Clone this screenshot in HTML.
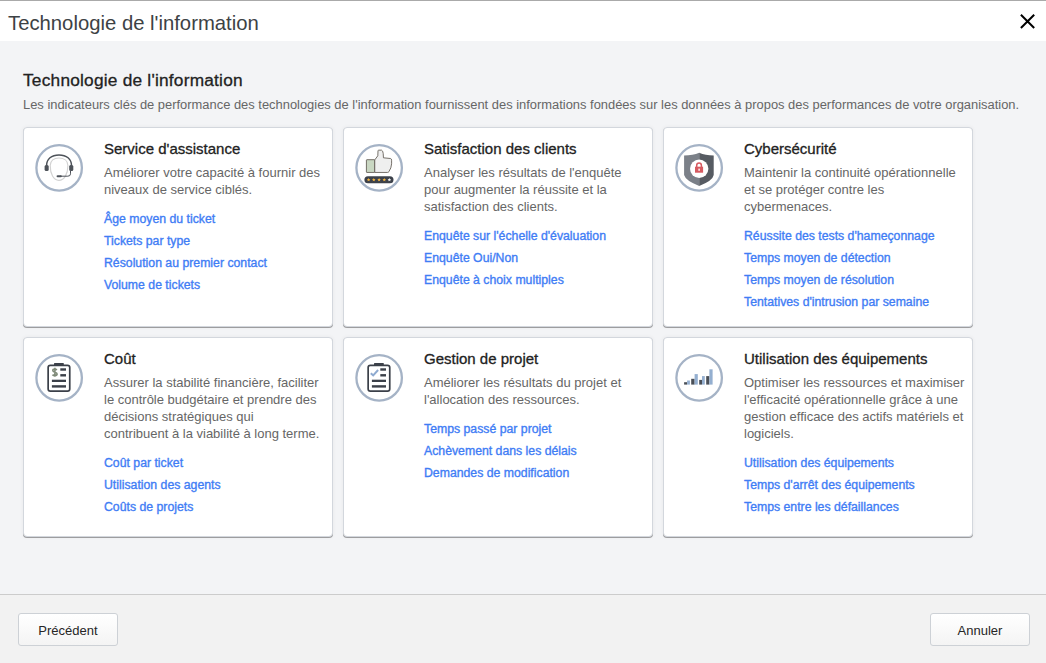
<!DOCTYPE html>
<html><head><meta charset="utf-8">
<style>
*{box-sizing:border-box;margin:0;padding:0}
html,body{width:1046px;height:663px;overflow:hidden;background:#f3f4f6;font-family:"Liberation Sans",sans-serif}
#top{position:absolute;left:0;top:0;width:1046px;height:1px;background:#aaa}
#hdr{position:absolute;left:0;top:1px;width:1046px;height:40px;background:#fff}
#hdr .t{position:absolute;left:8px;top:10px;font-size:20.3px;line-height:24px;color:#3d4245;white-space:nowrap}
#close{position:absolute;left:1010px;top:5px;width:36px;height:33px}
#main{position:absolute;left:0;top:41px;width:1046px;height:553px;background:#f3f4f6}
h1{position:absolute;left:23px;top:70px;font-size:17.3px;letter-spacing:0.22px;line-height:20px;font-weight:400;color:#222;white-space:nowrap;-webkit-text-stroke:0.3px #222}
.lead{position:absolute;left:23px;top:97px;font-size:12.91px;line-height:16px;color:#666;white-space:nowrap}
.card{position:absolute;width:310px;height:200px;background:#fff;border:1px solid #d3d7dd;border-radius:4px;box-shadow:0 1px 0 rgba(0,0,0,.34),0 0 4px rgba(0,0,0,.05)}
.ic{position:absolute;left:10px;top:15px;width:50px;height:50px}
.ct{position:absolute;left:80px;top:12px;font-size:15px;line-height:18px;font-weight:400;color:#222;white-space:nowrap;-webkit-text-stroke:0.3px #222}
.cd{position:absolute;left:80px;top:36px;font-size:13px;line-height:17px;color:#666;white-space:nowrap}
.lk{position:absolute;left:80px;font-size:12.27px;line-height:22px;color:#3f7df5;white-space:nowrap;-webkit-text-stroke:0.35px #3f7df5}
#foot{position:absolute;left:0;top:594px;width:1046px;height:69px;background:#f2f2f2;border-top:1px solid #ccc}
.btn{position:absolute;top:613px;width:100px;height:33px;border:1px solid #cdd1d6;border-radius:3px;background:linear-gradient(#fff,#f4f4f4);font-size:13px;color:#262626;text-align:center;line-height:33px}
</style></head><body>
<div id="top"></div>
<div id="hdr"><div class="t">Technologie de l'information</div>
</div>
<svg id="close" width="36" height="33" viewBox="0 0 36 33"><path d="M10.9 9.7L24.2 23M24.2 9.7L10.9 23" stroke="#000" stroke-width="2" fill="none"/></svg>
<div id="main"></div>
<h1>Technologie de l'information</h1>
<div class="lead">Les indicateurs clés de performance des technologies de l'information fournissent des informations fondées sur les données à propos des performances de votre organisation.</div>

<div class="card" style="left:23px;top:127px">
 <svg class="ic" viewBox="0 0 50 50"><circle cx="25.15" cy="24.85" r="22.75" fill="#fff" stroke="#a5b3c6" stroke-width="2.3"/><path d="M24.9 14.95 C29.8 14.95 33.9 17.5 33.9 22.5 C33.9 31 30.3 37.3 24.9 37.3 C19.5 37.3 16.2 31 16.2 22.5 C16.2 17.5 20 14.95 24.9 14.95 Z" fill="none" stroke="#d2d2d2" stroke-width="1.15"/><path d="M12.6 22.5 C12.6 16 17.5 11.9 25 11.9 C32.5 11.9 37.5 16 37.5 22.5" fill="none" stroke="#4d5259" stroke-width="1.5"/><rect x="10.6" y="21.9" width="4.1" height="6.1" rx="1.5" fill="#4d5259"/><rect x="35.2" y="21.9" width="4.1" height="6.1" rx="1.5" fill="#4d5259"/><path d="M36.5 28 V30.8 Q36.5 33.2 33.8 33.2 H26" fill="none" stroke="#4d5259" stroke-width="1"/><path d="M23.6 33.2 H26.8" stroke="#4d5259" stroke-width="2.1" stroke-linecap="round"/></svg>
 <div class="ct">Service d'assistance</div>
 <div class="cd">Améliorer votre capacité à fournir des<br>niveaux de service ciblés.</div>
 <div class="lk" style="top:80px">Âge moyen du ticket</div>
 <div class="lk" style="top:102px">Tickets par type</div>
 <div class="lk" style="top:124px">Résolution au premier contact</div>
 <div class="lk" style="top:146px">Volume de tickets</div>
</div>

<div class="card" style="left:343px;top:127px">
 <svg class="ic" viewBox="0 0 50 50"><circle cx="25.15" cy="24.85" r="22.75" fill="#fff" stroke="#a5b3c6" stroke-width="2.3"/><rect x="12.4" y="16.7" width="8.3" height="12.74" rx="0.5" fill="#c9d7c2" stroke="#5e5850" stroke-width="0.85"/><path d="M20.76 16.9 L23.8 12.8 L24 7.8 Q24.1 7.17 24.7 7.17 L27.5 7.17 Q28.9 7.6 29.2 10.4 L29.45 14.8 L36.6 15.5 Q37.6 15.8 37.6 17.2 L37.6 20.8 Q37.4 25 34.9 28.7 Q34.4 29.44 33.5 29.44 L20.76 29.44 Z" fill="#efefef" stroke="#5e5850" stroke-width="0.85"/><rect x="10.4" y="33.2" width="29.1" height="7.1" rx="3.55" fill="#3c414a"/><polygon points="14.60,34.90 15.10,36.11 16.41,36.21 15.41,37.06 15.72,38.34 14.60,37.65 13.48,38.34 13.79,37.06 12.79,36.21 14.10,36.11" fill="#f0b23e"/><polygon points="19.80,34.90 20.30,36.11 21.61,36.21 20.61,37.06 20.92,38.34 19.80,37.65 18.68,38.34 18.99,37.06 17.99,36.21 19.30,36.11" fill="#f0b23e"/><polygon points="25.10,34.90 25.60,36.11 26.91,36.21 25.91,37.06 26.22,38.34 25.10,37.65 23.98,38.34 24.29,37.06 23.29,36.21 24.60,36.11" fill="#f0b23e"/><polygon points="30.30,34.90 30.80,36.11 32.11,36.21 31.11,37.06 31.42,38.34 30.30,37.65 29.18,38.34 29.49,37.06 28.49,36.21 29.80,36.11" fill="#f0b23e"/><polygon points="35.40,34.90 35.90,36.11 37.21,36.21 36.21,37.06 36.52,38.34 35.40,37.65 34.28,38.34 34.59,37.06 33.59,36.21 34.90,36.11" fill="#f2f2f2"/></svg>
 <div class="ct">Satisfaction des clients</div>
 <div class="cd">Analyser les résultats de l'enquête<br>pour augmenter la réussite et la<br>satisfaction des clients.</div>
 <div class="lk" style="top:97px">Enquête sur l'échelle d'évaluation</div>
 <div class="lk" style="top:119px">Enquête Oui/Non</div>
 <div class="lk" style="top:141px">Enquête à choix multiples</div>
</div>

<div class="card" style="left:663px;top:127px">
 <svg class="ic" viewBox="0 0 50 50"><circle cx="25.15" cy="24.85" r="22.75" fill="#fff" stroke="#a5b3c6" stroke-width="2.3"/><path d="M25.2 9.8 Q19 12.5 10.1 12.5 L10.1 32 Q11.5 37.5 25.2 43 Z" fill="#7b8088"/><path d="M25.2 9.8 Q31.4 12.5 39.7 12.5 L39.7 32 Q38.9 37.5 25.2 43 Z" fill="#565b62"/><circle cx="25.2" cy="25.8" r="9.2" fill="#fff"/><rect x="21" y="23.7" width="8.1" height="6" fill="#d65a60"/><path d="M22.7 23.9 V22.4 Q22.7 19.9 25.05 19.9 Q27.4 19.9 27.4 22.4 V23.9" fill="none" stroke="#d65a60" stroke-width="1.5"/><rect x="24.4" y="25.6" width="1.4" height="2.2" fill="#fff"/></svg>
 <div class="ct">Cybersécurité</div>
 <div class="cd">Maintenir la continuité opérationnelle<br>et se protéger contre les<br>cybermenaces.</div>
 <div class="lk" style="top:97px">Réussite des tests d'hameçonnage</div>
 <div class="lk" style="top:119px">Temps moyen de détection</div>
 <div class="lk" style="top:141px">Temps moyen de résolution</div>
 <div class="lk" style="top:163px">Tentatives d'intrusion par semaine</div>
</div>

<div class="card" style="left:23px;top:337px">
 <svg class="ic" viewBox="0 0 50 50"><circle cx="25.15" cy="24.85" r="22.75" fill="#fff" stroke="#a5b3c6" stroke-width="2.3"/><rect x="14.15" y="12.35" width="21.6" height="25.8" rx="2.2" fill="#fff" stroke="#3b4049" stroke-width="1.7"/><rect x="20" y="9.9" width="9.8" height="2.5" rx="0.6" fill="#3b4049"/><rect x="26.3" y="15.3" width="5.7" height="2.4" fill="#3b4049"/><rect x="26.3" y="21.1" width="5.7" height="2.4" fill="#3b4049"/><rect x="17.9" y="26.7" width="14.1" height="2.3" fill="#3b4049"/><rect x="17.9" y="32.2" width="14.1" height="2.4" fill="#3b4049"/><path d="M22.9 17 Q22 16 20.8 16 Q18.8 16 18.8 17.6 Q18.8 18.9 20.9 19.3 Q23.1 19.7 23.1 21.1 Q23.1 22.6 20.9 22.6 Q19.4 22.6 18.5 21.6 M20.9 14.8 V23.75" fill="none" stroke="#7f8a78" stroke-width="1.6"/></svg>
 <div class="ct">Coût</div>
 <div class="cd">Assurer la stabilité financière, faciliter<br>le contrôle budgétaire et prendre des<br>décisions stratégiques qui<br>contribuent à la viabilité à long terme.</div>
 <div class="lk" style="top:114px">Coût par ticket</div>
 <div class="lk" style="top:136px">Utilisation des agents</div>
 <div class="lk" style="top:158px">Coûts de projets</div>
</div>

<div class="card" style="left:343px;top:337px">
 <svg class="ic" viewBox="0 0 50 50"><circle cx="25.15" cy="24.85" r="22.75" fill="#fff" stroke="#a5b3c6" stroke-width="2.3"/><rect x="14.15" y="12.35" width="21.6" height="25.8" rx="2.2" fill="#fff" stroke="#3b4049" stroke-width="1.7"/><rect x="20" y="9.9" width="9.8" height="2.5" rx="0.6" fill="#3b4049"/><rect x="26.3" y="15.3" width="5.7" height="2.4" fill="#3b4049"/><rect x="26.3" y="21.1" width="5.7" height="2.4" fill="#3b4049"/><rect x="17.9" y="26.7" width="14.1" height="2.3" fill="#3b4049"/><rect x="17.9" y="32.2" width="14.1" height="2.4" fill="#3b4049"/><path d="M16.8 20.2 L19.2 22.4 L24.1 17" fill="none" stroke="#8eaad0" stroke-width="2"/></svg>
 <div class="ct">Gestion de projet</div>
 <div class="cd">Améliorer les résultats du projet et<br>l'allocation des ressources.</div>
 <div class="lk" style="top:80px">Temps passé par projet</div>
 <div class="lk" style="top:102px">Achèvement dans les délais</div>
 <div class="lk" style="top:124px">Demandes de modification</div>
</div>

<div class="card" style="left:663px;top:337px">
 <svg class="ic" viewBox="0 0 50 50"><circle cx="25.15" cy="24.85" r="22.75" fill="#fff" stroke="#a5b3c6" stroke-width="2.3"/><rect x="10.1" y="29.2" width="3.0" height="2.4" fill="#4a4f57"/><rect x="13.1" y="27.5" width="2.8" height="4.1" fill="#94afd0"/><rect x="17.2" y="25.8" width="3.4" height="5.8" fill="#4a4f57"/><rect x="20.6" y="21.1" width="3.2" height="10.5" fill="#94afd0"/><rect x="25.2" y="26.9" width="2.8" height="4.7" fill="#4a4f57"/><rect x="28.0" y="23.1" width="2.8" height="8.5" fill="#94afd0"/><rect x="32.2" y="23.1" width="3.2" height="8.5" fill="#4a4f57"/><rect x="35.4" y="16.3" width="3.2" height="15.3" fill="#94afd0"/></svg>
 <div class="ct">Utilisation des équipements</div>
 <div class="cd">Optimiser les ressources et maximiser<br>l'efficacité opérationnelle grâce à une<br>gestion efficace des actifs matériels et<br>logiciels.</div>
 <div class="lk" style="top:114px">Utilisation des équipements</div>
 <div class="lk" style="top:136px">Temps d'arrêt des équipements</div>
 <div class="lk" style="top:158px">Temps entre les défaillances</div>
</div>

<div id="foot"></div>
<div class="btn" style="left:18px">Précédent</div>
<div class="btn" style="left:930px">Annuler</div>
</body></html>
